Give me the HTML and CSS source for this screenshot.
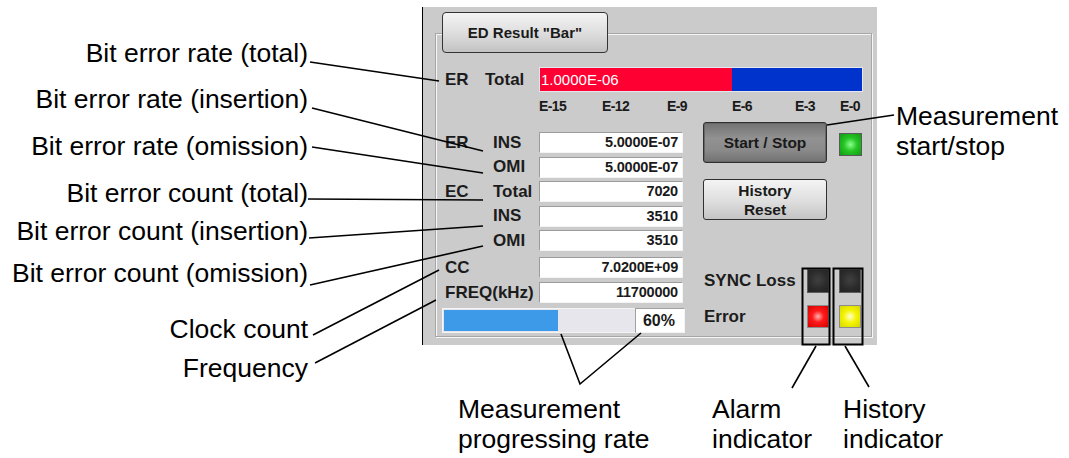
FILE: index.html
```html
<!DOCTYPE html>
<html>
<head>
<meta charset="utf-8">
<title>ED Result Bar</title>
<link rel="stylesheet" href="styles.css">
</head>
<body>
<div class="stage">
  <div class="panel">
    <div class="tab">ED Result "Bar"</div>
    <div class="group">
      <div class="er-row">
        <span class="lab lab-er">ER</span>
        <span class="lab lab-total">Total</span>
        <div class="er-bar"><div class="er-fill" style="width:192px">1.0000E-06</div></div>
      </div>
      <div class="ticks">
        <span class="tk tk1">E-15</span><span class="tk tk2">E-12</span><span class="tk tk3">E-9</span><span class="tk tk4">E-6</span><span class="tk tk5">E-3</span><span class="tk">E-0</span>
      </div>
      <div class="main">
        <div class="fields">
          <div class="frow"><span class="lab">ER</span><span class="lab">INS</span><span class="val">5.0000E-07</span></div>
          <div class="frow"><span class="lab"></span><span class="lab">OMI</span><span class="val">5.0000E-07</span></div>
          <div class="frow"><span class="lab">EC</span><span class="lab">Total</span><span class="val">7020</span></div>
          <div class="frow"><span class="lab"></span><span class="lab">INS</span><span class="val">3510</span></div>
          <div class="frow"><span class="lab"></span><span class="lab">OMI</span><span class="val">3510</span></div>
          <div class="frow cc"><span class="lab">CC</span><span class="lab"></span><span class="val">7.0200E+09</span></div>
          <div class="frow freq"><span class="lab lab-wide">FREQ(kHz)</span><span class="val">11700000</span></div>
          <div class="progress"><div class="pfill" style="width:114px"></div><div class="pspacer"></div><div class="ppct">60%</div></div>
        </div>
        <div class="controls">
          <div class="ctl-row">
            <div class="btn btn-dark">Start / Stop</div>
            <div class="led led-green"></div>
          </div>
          <div class="btn btn-light">History<br>Reset</div>
          <div class="ind">
            <span class="ind-label">SYNC Loss</span>
            <span class="led led-off"></span>
            <span class="led led-off"></span>
            <span class="ind-label">Error</span>
            <span class="led led-red"></span>
            <span class="led led-yellow"></span>
          </div>
        </div>
      </div>
    </div>
  </div>

  <svg class="leaders" width="1069" height="458" viewBox="0 0 1069 458">
    <g stroke="#000" stroke-width="1.6" fill="none">
      <line x1="310" y1="62" x2="439" y2="81"/>
      <line x1="312" y1="108" x2="483" y2="151"/>
      <line x1="312" y1="147" x2="483" y2="173"/>
      <line x1="308" y1="199" x2="483" y2="200"/>
      <line x1="309" y1="238" x2="483" y2="226"/>
      <line x1="310" y1="285" x2="483" y2="246"/>
      <line x1="313" y1="335" x2="439" y2="270"/>
      <line x1="315" y1="363" x2="436" y2="300"/>
      <line x1="827" y1="125" x2="894" y2="115"/>
      <polyline points="561,334 580,384 641,333"/>
      <line x1="816" y1="346" x2="792" y2="388"/>
      <line x1="845" y1="346" x2="869" y2="387"/>
      <rect x="802.5" y="268.5" width="27" height="76" stroke-width="2"/>
      <rect x="833.5" y="268.5" width="29" height="76" stroke-width="2"/>
    </g>
  </svg>

  <div class="note note-l n1">Bit error rate (total)</div>
  <div class="note note-l n2">Bit error rate (insertion)</div>
  <div class="note note-l n3">Bit error rate (omission)</div>
  <div class="note note-l n4">Bit error count (total)</div>
  <div class="note note-l n5">Bit error count (insertion)</div>
  <div class="note note-l n6">Bit error count (omission)</div>
  <div class="note note-l n7">Clock count</div>
  <div class="note note-l n8">Frequency</div>
  <div class="note n-start">Measurement<br>start/stop</div>
  <div class="note n-prog">Measurement<br>progressing rate</div>
  <div class="note n-alarm">Alarm<br>indicator</div>
  <div class="note n-hist">History<br>indicator</div>
</div>
</body>
</html>
```

FILE: styles.css
```css
* { box-sizing: border-box; }
html, body { margin: 0; padding: 0; background: #fff; }

.stage {
  position: relative;
  width: 1069px;
  height: 458px;
  overflow: hidden;
  padding-top: 7px;
  background: #fff;
  font-family: "Liberation Sans", Arial, sans-serif;
  color: #1a1a1a;
}

/* ---------- instrument panel ---------- */
.panel {
  margin-left: 422px;
  width: 455px;
  height: 338px;
  background: #cbcbcb;
  border-left: 1px solid #000;
  padding-top: 5px;
}

.tab {
  position: relative;
  z-index: 1;
  margin-left: 19px;
  width: 166px;
  height: 41px;
  border: 1px solid #333;
  border-radius: 4px;
  background: linear-gradient(#f4f4f4, #dcdcdc 55%, #c2c2c2);
  font-weight: bold;
  font-size: 15px;
  line-height: 39px;
  text-align: center;
}

.group {
  margin: -20px 0 0 12px;
  width: 437px;
  height: 304px;
  border: 1px solid #a6a6a6;
  box-shadow: inset 1px 1px 0 #f6f6f6, 1px 1px 0 #f6f6f6;
  padding-top: 33px;
}

.lab {
  font-weight: bold;
  font-size: 17px;
  color: #1c1c1c;
  white-space: nowrap;
}

.er-row {
  display: flex;
  align-items: center;
  height: 25px;
  padding-left: 9px;
}
.lab-er { width: 40px; }
.lab-total { width: 54px; }

.er-bar {
  display: flex;
  width: 324px;
  height: 25px;
  background: #0033cc;
  border: 1px solid #e6e6ee;
}
.er-fill {
  height: 100%;
  background: #ff0033;
  color: #fff;
  font-size: 15px;
  line-height: 23px;
  padding-left: 1px;
  white-space: nowrap;
}

.ticks {
  display: flex;
  margin: 7px 0 0 103px;
  height: 14px;
  font-weight: bold;
  font-size: 14px;
  line-height: 14px;
  letter-spacing: -0.6px;
}
.tk1 { width: 63px; }
.tk2 { width: 65px; }
.tk3 { width: 65px; }
.tk4 { width: 63px; }
.tk5 { width: 45px; }

.main {
  display: flex;
  margin-top: 9px;
}

.fields {
  margin-left: 6px;
  width: 243px;
  padding-top: 10px;
}

.frow {
  display: grid;
  grid-template-columns: 51px 46px 144px;
  height: 21px;
  align-items: center;
}
.frow + .frow { margin-top: 3.5px; }
.frow.cc { margin-top: 6px; }
.frow.freq { margin-top: 4px; }
.frow .lab:first-child { padding-left: 3px; }
.frow .lab-wide { grid-column: 1 / 3; }

.val {
  height: 21px;
  background: #fff;
  border: 1px solid;
  border-color: #9c9c9c #f4f4f4 #f4f4f4 #9c9c9c;
  text-align: right;
  padding-right: 4px;
  font-weight: bold;
  font-size: 14.5px;
  line-height: 19px;
  letter-spacing: -0.2px;
}

.progress {
  display: flex;
  margin-top: 5px;
  height: 25px;
  border: 1px solid #f4f4f4;
  background: #e6e6ec;
  padding: 1px;
}
.pfill { background: #3c9ae8; }
.pspacer { flex: 1; }
.ppct {
  width: 50px;
  margin: -2px -2px -2px 0;
  background: #fff;
  border: 1px solid;
  border-color: #a0a0a0 #f4f4f4 #f4f4f4 #a0a0a0;
  text-align: right;
  padding-right: 9px;
  font-weight: bold;
  font-size: 16px;
  line-height: 23px;
}

/* ---------- controls ---------- */
.controls { margin-left: 18px; }

.ctl-row {
  display: flex;
  align-items: center;
  gap: 12px;
}

.btn {
  display: flex;
  align-items: center;
  justify-content: center;
  width: 124px;
  height: 41px;
  border: 1px solid #303030;
  border-radius: 3px;
  font-weight: bold;
  font-size: 15.5px;
  line-height: 19px;
  text-align: center;
  color: #1a1a1a;
}
.btn-dark {
  background: linear-gradient(#727272, #929292 40%, #8a8a8a 70%, #727272);
  box-shadow: inset 0 0 0 1px #666;
}
.btn-light {
  margin-top: 16px;
  background: linear-gradient(#f4f4f4, #dedede 55%, #c4c4c4);
}

.led {
  display: block;
  width: 22px;
  height: 23px;
  border: 1px solid #666;
}
.led-green {
  width: 23px;
  margin-top: 4px;
  border-color: #5a5a5a;
  background: radial-gradient(circle at 50% 50%, #8dff8d 0, #25c625 45%, #129a12 100%);
}
.led-off {
  height: 24px;
  border-color: #5c5c5c;
  background: radial-gradient(circle at 50% 45%, #404040 0, #2a2a2a 60%, #222 100%);
}
.led-red {
  border-color: #8c8c8c;
  background: radial-gradient(circle at 50% 50%, #ffb0b0 0, #ff1a1a 40%, #d60000 100%);
}
.led-yellow {
  border-color: #8c8c8c;
  background: radial-gradient(circle at 50% 50%, #ffffd0 0, #f4f400 45%, #d6d600 100%);
}

.ind {
  display: grid;
  grid-template-columns: 94px 22px 22px;
  column-gap: 10px;
  row-gap: 12px;
  align-items: center;
  margin-top: 49px;
}
.ind-label {
  padding-left: 1px;
  font-weight: bold;
  font-size: 17px;
  white-space: nowrap;
  color: #1c1c1c;
}

/* ---------- callouts ---------- */
.leaders {
  position: absolute;
  left: 0;
  top: 0;
  z-index: 2;
  pointer-events: none;
}

.note {
  position: absolute;
  font-family: "Liberation Sans", Arial, sans-serif;
  font-size: 26.5px;
  line-height: 30px;
  color: #000;
  white-space: nowrap;
}
.note-l { right: 761px; text-align: right; }
.n1 { top: 38px; }
.n2 { top: 84px; }
.n3 { top: 131px; }
.n4 { top: 178px; }
.n5 { top: 216px; }
.n6 { top: 258px; }
.n7 { top: 314px; }
.n8 { top: 353px; }

.n-start { left: 896px; top: 101px; }
.n-prog { left: 458px; top: 394px; }
.n-alarm { left: 712px; top: 394px; }
.n-hist { left: 843px; top: 394px; }
```
